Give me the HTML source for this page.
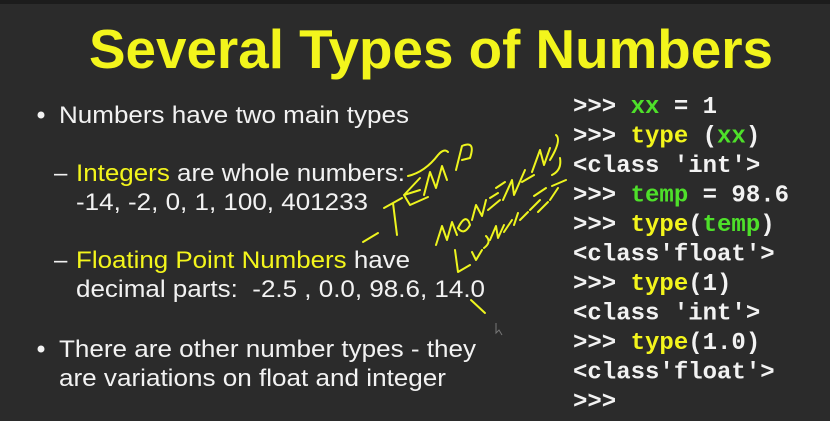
<!DOCTYPE html>
<html><head><meta charset="utf-8"><style>
html,body{margin:0;padding:0;background:#2b2b2b;}
svg{display:block}
</style></head><body>
<svg width="830" height="421" viewBox="0 0 830 421" xmlns="http://www.w3.org/2000/svg">
<rect width="830" height="421" fill="#2b2b2b"/>
<rect width="830" height="4" fill="#1c1c1c"/>
<text x="89" y="68" font-family="Liberation Sans, sans-serif" font-weight="bold" font-size="55" fill="#f3f51c" textLength="684" lengthAdjust="spacingAndGlyphs">Several Types of Numbers</text>
<g font-family="Liberation Sans, sans-serif" font-size="24" fill="#f2f2f2">
<circle cx="41" cy="115" r="3.5" fill="#f2f2f2"/>
<text x="59" y="123" textLength="350" lengthAdjust="spacingAndGlyphs">Numbers have two main types</text>
<text x="54" y="181">–</text>
<text x="76" y="181" textLength="329" lengthAdjust="spacingAndGlyphs"><tspan fill="#f3f51c">Integers</tspan> are whole numbers:</text>
<text x="76" y="210" textLength="292" lengthAdjust="spacingAndGlyphs">-14, -2, 0, 1, 100, 401233</text>
<text x="54" y="268">–</text>
<text x="76" y="268" textLength="334" lengthAdjust="spacingAndGlyphs"><tspan fill="#f3f51c">Floating Point Numbers</tspan> have</text>
<text x="76" y="297" textLength="409" lengthAdjust="spacingAndGlyphs" xml:space="preserve">decimal parts:  -2.5 , 0.0, 98.6, 14.0</text>
<circle cx="41" cy="349" r="3.5" fill="#f2f2f2"/>
<text x="59" y="357" textLength="417" lengthAdjust="spacingAndGlyphs">There are other number types - they</text>
<text x="59" y="386" textLength="387" lengthAdjust="spacingAndGlyphs">are variations on float and integer</text>
</g>
<g font-family="Liberation Mono, monospace" font-weight="bold" font-size="24" fill="#f2f2f2" xml:space="preserve">
<text x="573" y="113">&gt;&gt;&gt; <tspan fill="#4ee02a">xx</tspan> = 1</text>
<text x="573" y="142.5">&gt;&gt;&gt; <tspan fill="#f3f51c">type</tspan> (<tspan fill="#4ee02a">xx</tspan>)</text>
<text x="573" y="172">&lt;class 'int'&gt;</text>
<text x="573" y="201.5">&gt;&gt;&gt; <tspan fill="#4ee02a">temp</tspan> = 98.6</text>
<text x="573" y="231">&gt;&gt;&gt; <tspan fill="#f3f51c">type</tspan>(<tspan fill="#4ee02a">temp</tspan>)</text>
<text x="573" y="260.5">&lt;class'float'&gt;</text>
<text x="573" y="290">&gt;&gt;&gt; <tspan fill="#f3f51c">type</tspan>(1)</text>
<text x="573" y="319.5">&lt;class 'int'&gt;</text>
<text x="573" y="349">&gt;&gt;&gt; <tspan fill="#f3f51c">type</tspan>(1.0)</text>
<text x="573" y="378.5">&lt;class'float'&gt;</text>
<text x="573" y="408">&gt;&gt;&gt;</text>
</g>
<g fill="none" stroke="#eef51e" stroke-width="2" stroke-linecap="round" stroke-linejoin="round">
<path d="M408 176 Q425 172 438 155 Q444 148 448 152"/>
<path d="M363 242 L378 233"/>
<path d="M384 208 L402 198 M393 203 L397 235"/>
<path d="M420 178 L404 195 L410 205 M404 195 L420 190 M410 205 L428 197"/>
<path d="M424 195 L430 172 L436 188 L442 166 L447 180"/>
<path d="M456 170 L462 146 Q476 140 470 158 L462 160"/>
<path d="M436 245 L442 226 L447 240 L452 222 L457 235 M458 228 Q466 212 470 225 Q464 236 458 228 M472 220 L476 205 L482 216 L486 200 M488 210 L500 200 M490 198 L498 193 M496 188 L505 182 M503 200 L512 180 L514 195 L525 170 M522 182 L534 175 M532 172 L540 150 L544 165 L550 148 M550 160 Q562 140 556 135 M552 175 Q562 170 560 158"/>
<path d="M455 250 L458 272 L470 265 M472 252 L476 260 L482 250 M484 248 Q492 242 486 236 M490 240 L496 226 L498 238 L504 225 M504 232 L512 220 M514 225 L518 213 M520 220 L528 212 M530 210 L540 200 M534 196 L546 188 M538 212 L548 202 M550 200 L558 188 M552 186 L566 180"/>
<path d="M471 300 L485 313"/>
</g>
<path d="M496 323 L496 333 L499 330 L502 335" fill="none" stroke="#777" stroke-width="1"/>
</svg>
</body></html>
